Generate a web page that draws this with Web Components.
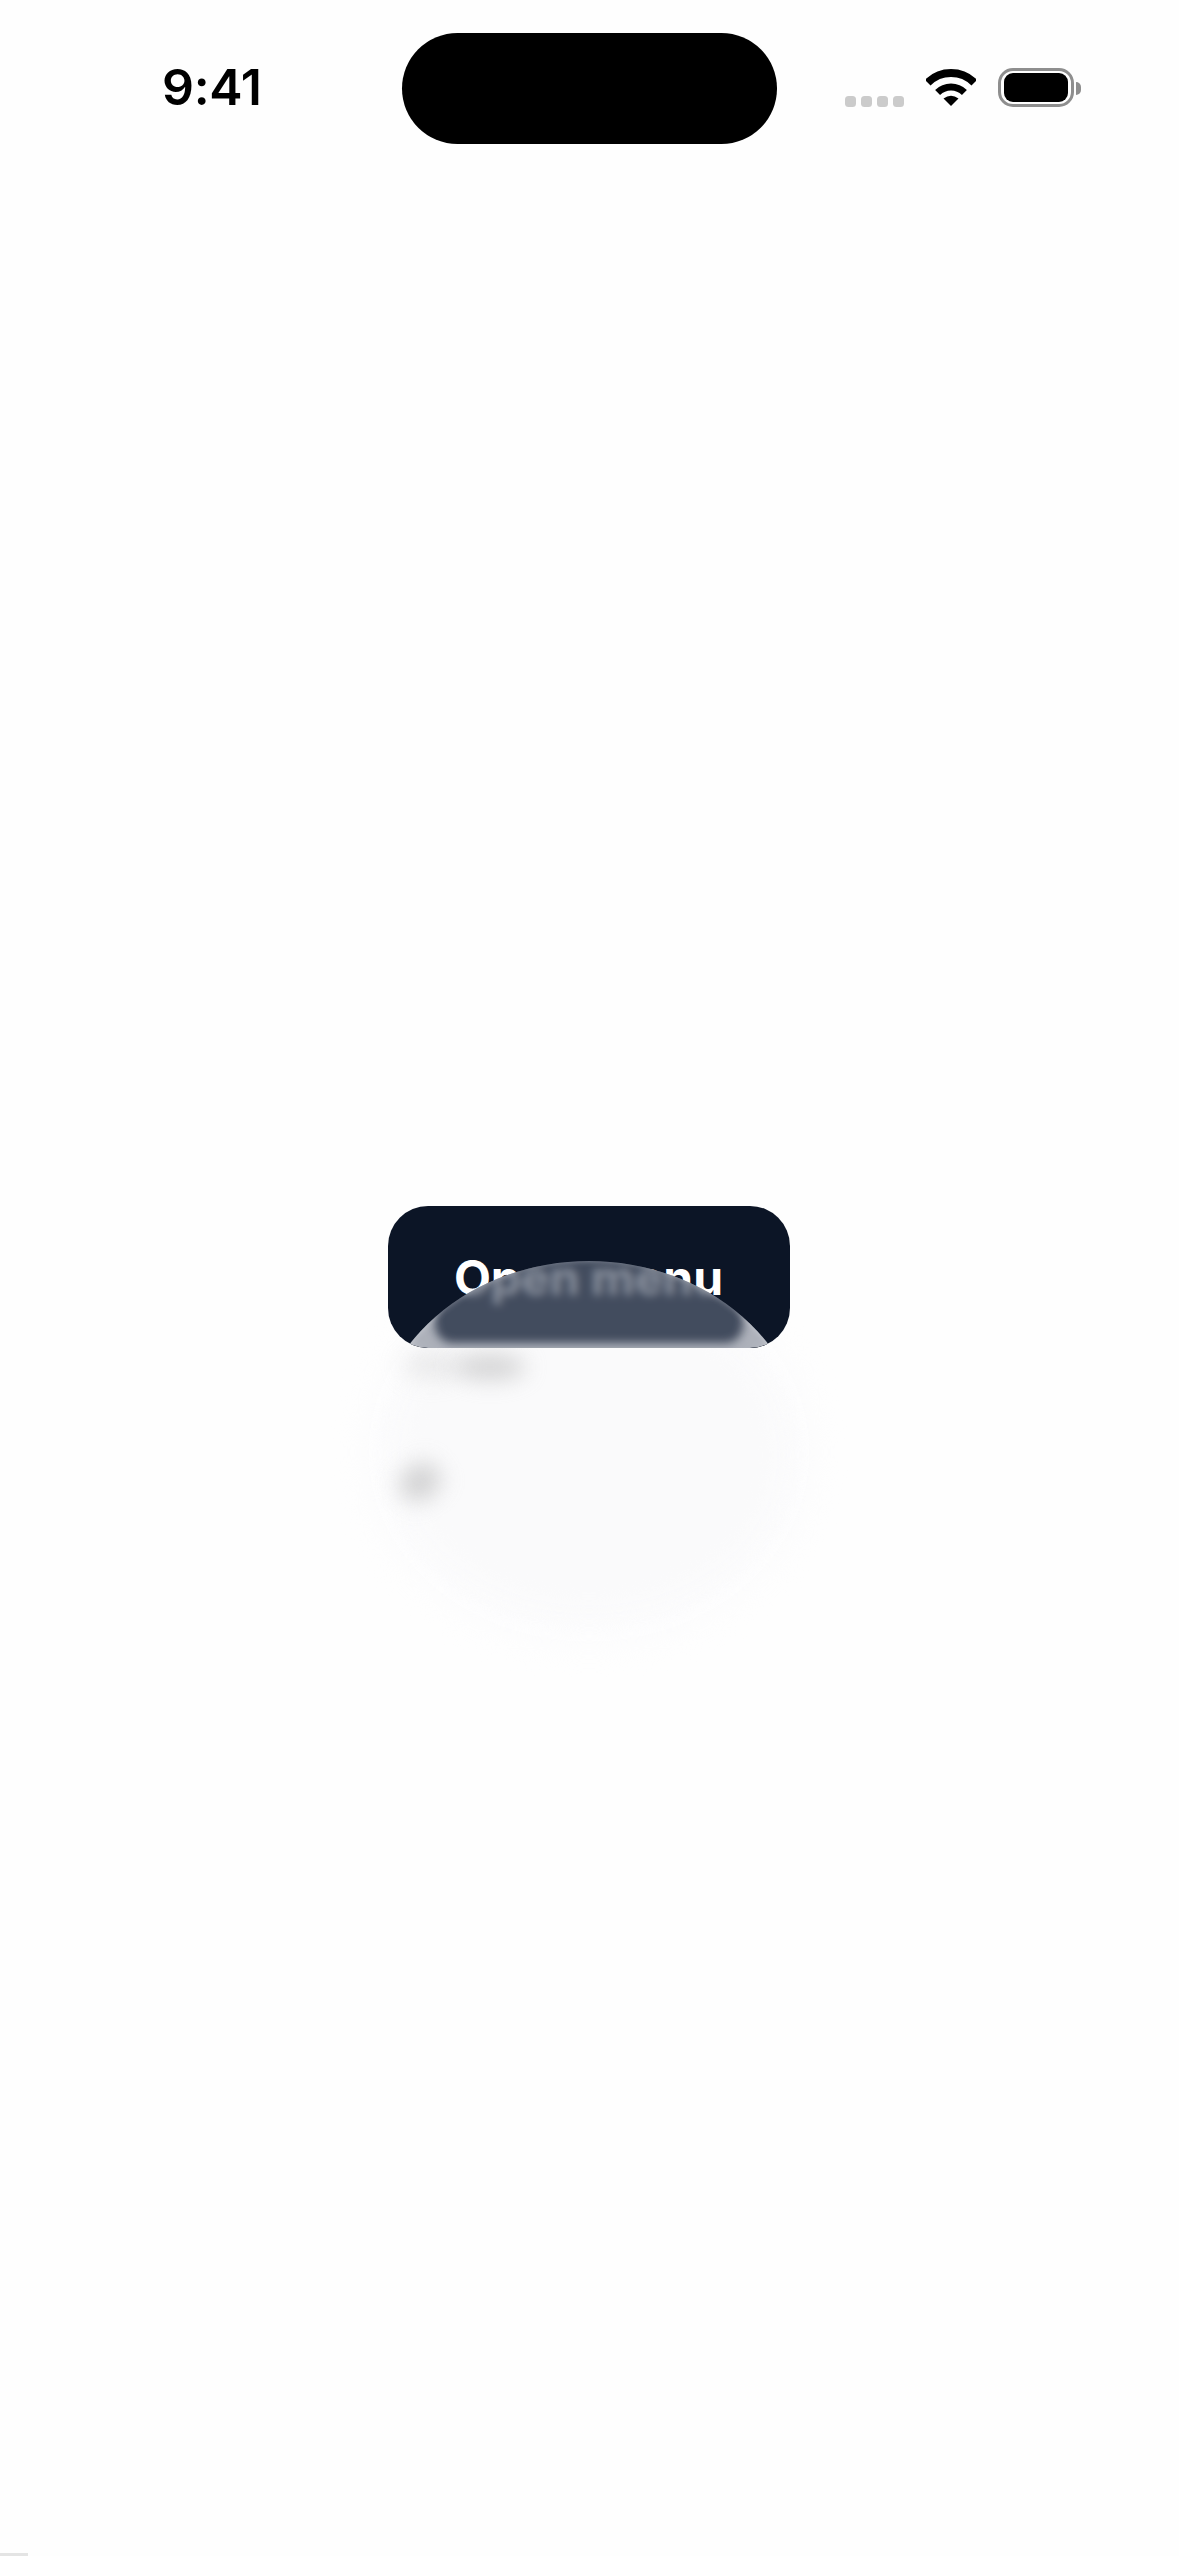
<!DOCTYPE html>
<html lang="en">
<head>
<meta charset="utf-8">
<title>Open menu</title>
<style>
  html, body { margin: 0; height: 100%; background: #fefefe; }
  body { font-family: Inter, "Liberation Sans", sans-serif; overflow: hidden; }
  main { display: flex; flex-direction: column; align-items: center; padding-top: 1046px; }
</style>
</head>
<body>
<status-bar time="9:41"></status-bar>
<main>
  <menu-button>Open menu</menu-button>
</main>
<page-mark></page-mark>

<template id="status-tpl">
  <style>
    :host { display: flex; align-items: flex-start; height: 160px; box-sizing: border-box; padding: 33px 0 0 162px; color: #000; }
    .time { width: 240px; margin-top: 29px; font: 600 50px/50px Inter, sans-serif; letter-spacing: -.3px; }
    .island { width: 375px; height: 111px; border-radius: 56px; background: #000; }
    .right { display: flex; align-items: flex-start; margin-left: 68px; }
    .dots { display: flex; gap: 5px; margin-top: 63px; }
    .dots i { width: 11px; height: 11px; border-radius: 3.5px; background: #cbcbcb; }
    .wifi { margin: 36px 0 0 22px; display: block; }
    .battery { box-sizing: border-box; width: 76px; height: 39px; margin: 35px 0 0 22px; padding: 2px 3px; border: 3px solid #8e8e8e; border-radius: 15px; }
    .battery b { display: block; height: 100%; border-radius: 9px; background: #000; }
    .nub { width: 5px; height: 13px; margin: 49px 0 0 2px; border-radius: 0 5px 5px 0; background: #8e8e8e; }
  </style>
  <span class="time"></span>
  <div class="island"></div>
  <div class="right">
    <div class="dots"><i></i><i></i><i></i><i></i></div>
    <svg class="wifi" width="50" height="37" viewBox="0 0 50 37" fill="none" stroke="#000">
      <path stroke-width="8" d="M1.7 13.7A33 33 0 0 1 48.3 13.7"/>
      <path stroke-width="7" d="M11.6 23.6A19 19 0 0 1 38.4 23.6"/>
      <path fill="#000" stroke="none" d="M25 37L17.5 29.5Q25 24 32.5 29.5Z"/>
    </svg>
    <div class="battery"><b></b></div>
    <div class="nub"></div>
  </div>
</template>

<template id="button-tpl">
  <style>
    :host { display: block; position: relative; width: 402px; height: 142px; margin-right: 1px; }
    .haze, .core, .smudge { position: absolute; }
    .haze { left: -20px; top: 56px; width: 442px; height: 380px; border-radius: 50%; background: #fcfcfd; filter: blur(16px); }
    .core { left: 4px; top: 90px; width: 394px; height: 318px; border-radius: 50%; background: #fafafb; filter: blur(12px); }
    .smudge { background: #c4c4c5; border-radius: 50%; }
    .s1 { left: 66px; top: 148px; width: 72px; height: 26px; filter: blur(11px); opacity: .7; }
    .s2 { left: 10px; top: 258px; width: 44px; height: 36px; filter: blur(11px); opacity: .72; transform: rotate(-35deg); }
    .s3 { left: 14px; top: 146px; width: 60px; height: 26px; filter: blur(12px); opacity: .35; }
    button { position: relative; display: flex; align-items: center; justify-content: center; box-sizing: border-box; width: 100%; height: 100%; padding: 2px 1px 0 0; border: 0; border-radius: 40px; overflow: hidden; background: #0c1526; color: #fff; font: 650 48px/58px Inter, sans-serif; }
    /* the glass over the button: blurs the label below it, pale rim round the dark middle */
    .lens { position: absolute; left: -16px; top: 55px; width: 434px; height: 380px; border-radius: 50%; overflow: hidden; backdrop-filter: blur(4px); background: rgba(90,100,118,.7); box-shadow: inset 0 0 6px rgba(245,245,248,.35); }
    .hole { position: absolute; left: 63px; top: -8px; width: 308px; height: 90px; border-radius: 50% 50% 18px 18px / 72% 72% 18px 18px; box-shadow: 0 0 0 300px rgba(245,245,248,.6); filter: blur(5px); }
  </style>
  <div class="haze"></div>
  <div class="core"></div>
  <div class="smudge s3"></div>
  <div class="smudge s1"></div>
  <div class="smudge s2"></div>
  <button type="button">
    <slot></slot>
    <div class="lens"><div class="hole"></div></div>
  </button>
</template>

<script>
class StatusBar extends HTMLElement {
  constructor() {
    super();
    const root = this.attachShadow({ mode: "open" });
    root.appendChild(document.getElementById("status-tpl").content.cloneNode(true));
    root.querySelector(".time").textContent = this.getAttribute("time");
  }
}

class MenuButton extends HTMLElement {
  constructor() {
    super();
    const root = this.attachShadow({ mode: "open" });
    root.appendChild(document.getElementById("button-tpl").content.cloneNode(true));
  }
}

// the hairline that sits in the bottom corner of the capture
class PageMark extends HTMLElement {
  constructor() {
    super();
    this.attachShadow({ mode: "open" }).innerHTML = `
      <style>
        :host { display: block; position: absolute; left: 0; bottom: 0; width: 28px; height: 3px; background: #e4e4e4; }
      </style>`;
  }
}

customElements.define("status-bar", StatusBar);
customElements.define("menu-button", MenuButton);
customElements.define("page-mark", PageMark);
</script>
</body>
</html>
